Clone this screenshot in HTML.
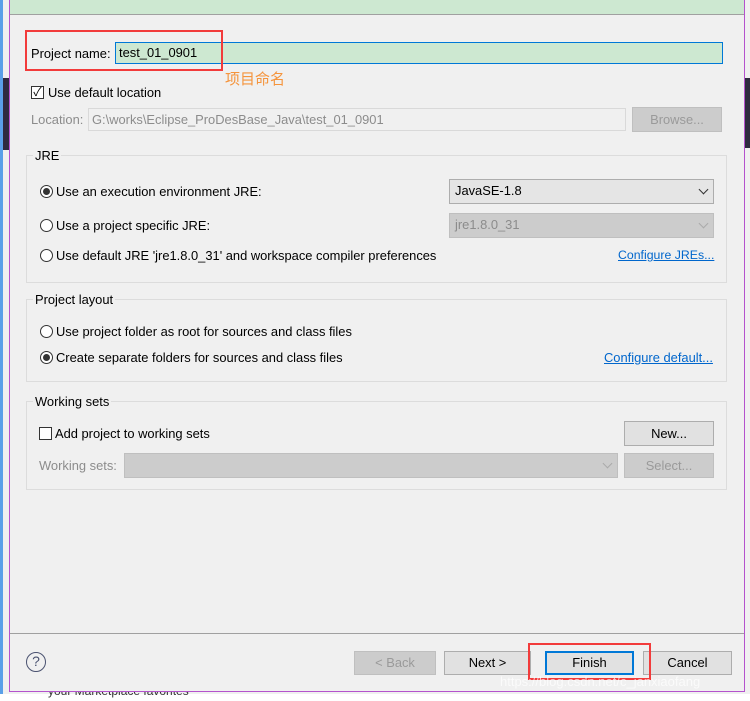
<!DOCTYPE html>
<html><head><meta charset="utf-8"><style>
*{margin:0;padding:0;box-sizing:border-box}
body{width:750px;height:701px;background:#f0f0f0;position:relative;overflow:hidden;font-family:"Liberation Sans","Noto Sans CJK SC",sans-serif;font-size:12.9px;color:#000}
.a{position:absolute}
.dlg{left:9px;top:0;width:736px;height:692px;background:#f0f0f0;border-left:1px solid #b452cd;border-right:1px solid #b452cd;border-bottom:1px solid #b452cd}
.grp{border:1px solid #dcdcdc}
.lbl{background:#f0f0f0;padding:0 2px}
.rad{width:13px;height:13px;border:1px solid #333;border-radius:50%;background:#fff}
.rad.on::after{content:"";position:absolute;left:2px;top:2px;width:7px;height:7px;border-radius:50%;background:#333}
.btn{border:1px solid #adadad;background:#e1e1e1;text-align:center;line-height:22px}
.dis{color:#9a9a9a;background:#cccccc;border-color:#bfbfbf}
.lnk{color:#0066cc;text-decoration:underline}
.cmb{border:1px solid #adadad;background:#e5e5e5;padding-left:5px;line-height:22px}
.chev{position:absolute;right:6px;top:6px;width:7px;height:7px;border-right:1.3px solid #333;border-bottom:1.3px solid #333;transform:rotate(45deg)}
</style></head><body>
<div class="a" style="left:0;top:78px;width:9px;height:72px;background:#2e2b3f"></div>
<div class="a" style="left:745px;top:78px;width:5px;height:70px;background:#2e2b3f"></div>
<div class="a" style="left:0;top:0;width:3px;height:701px;background:#5aa0e8"></div>
<div class="a" style="left:0;top:694px;width:750px;height:7px;background:#fff"></div>
<div class="a" style="left:48px;top:684px;font-size:12px;color:#333">your Marketplace favorites</div>
<div class="a dlg"></div>
<div class="a" style="left:10px;top:0;width:734px;height:15px;background:#cde8d1;border-bottom:1px solid #a0a0a0"></div>
<div class="a" style="left:31px;top:46px">Project name:</div>
<div class="a" style="left:115px;top:42px;width:608px;height:22px;border:1px solid #0078d7;background:#cde8d1;padding-left:3px;line-height:20px">test_01_0901</div>
<div class="a" style="left:25px;top:30px;width:198px;height:41px;border:2px solid #f23b3b"></div>
<div class="a" style="left:225px;top:68px;color:#f5943c;font-size:15px">项目命名</div>
<div class="a" style="left:31px;top:86px;width:13px;height:13px;border:1px solid #333;background:#fff;font-size:12px;line-height:11px;text-align:center">✓</div>
<div class="a" style="left:48px;top:85px">Use default location</div>
<div class="a" style="left:31px;top:112px;color:#8c8c8c">Location:</div>
<div class="a" style="left:88px;top:108px;width:538px;height:23px;border:1px solid #d9d9d9;background:#f0f0f0;color:#8c8c8c;padding-left:3px;line-height:21px">G:\works\Eclipse_ProDesBase_Java\test_01_0901</div>
<div class="a btn dis" style="left:632px;top:107px;width:90px;height:25px;line-height:23px">Browse...</div>

<div class="a grp" style="left:26px;top:155px;width:701px;height:128px"></div>
<div class="a lbl" style="left:33px;top:148px">JRE</div>
<div class="a rad on" style="left:40px;top:185px"></div><div class="a" style="left:56px;top:184px">Use an execution environment JRE:</div>
<div class="a rad" style="left:40px;top:219px"></div><div class="a" style="left:56px;top:218px">Use a project specific JRE:</div>
<div class="a rad" style="left:40px;top:249px"></div><div class="a" style="left:56px;top:248px">Use default JRE 'jre1.8.0_31' and workspace compiler preferences</div>
<div class="a cmb" style="left:449px;top:179px;width:265px;height:25px">JavaSE-1.8<span class="chev"></span></div>
<div class="a cmb" style="left:449px;top:213px;width:265px;height:25px;background:#cccccc;border-color:#bfbfbf;color:#8c8c8c">jre1.8.0_31<span class="chev" style="border-color:#aaa"></span></div>
<div class="a lnk" style="left:618px;top:248px;font-size:12.3px">Configure JREs...</div>

<div class="a grp" style="left:26px;top:299px;width:701px;height:83px"></div>
<div class="a lbl" style="left:33px;top:292px">Project layout</div>
<div class="a rad" style="left:40px;top:325px"></div><div class="a" style="left:56px;top:324px">Use project folder as root for sources and class files</div>
<div class="a rad on" style="left:40px;top:351px"></div><div class="a" style="left:56px;top:350px">Create separate folders for sources and class files</div>
<div class="a lnk" style="left:604px;top:350px">Configure default...</div>

<div class="a grp" style="left:26px;top:401px;width:701px;height:89px"></div>
<div class="a lbl" style="left:33px;top:394px">Working sets</div>
<div class="a" style="left:39px;top:427px;width:13px;height:13px;border:1px solid #333;background:#fff"></div>
<div class="a" style="left:55px;top:426px">Add project to working sets</div>
<div class="a btn" style="left:624px;top:421px;width:90px;height:25px;line-height:23px">New...</div>
<div class="a" style="left:39px;top:458px;color:#8c8c8c">Working sets:</div>
<div class="a cmb" style="left:124px;top:453px;width:494px;height:25px;background:#cccccc;border-color:#bfbfbf"><span class="chev" style="border-color:#aaa"></span></div>
<div class="a btn dis" style="left:624px;top:453px;width:90px;height:25px;line-height:23px">Select...</div>

<div class="a" style="left:10px;top:633px;width:734px;height:1px;background:#a0a0a0"></div>
<div class="a" style="left:26px;top:652px;width:20px;height:20px;border:1.5px solid #4a5270;border-radius:50%;text-align:center;line-height:17px;color:#4a5270;font-size:14px">?</div>
<div class="a btn dis" style="left:354px;top:651px;width:82px;height:24px">&lt; Back</div>
<div class="a btn" style="left:444px;top:651px;width:87px;height:24px">Next &gt;</div>
<div class="a btn" style="left:545px;top:651px;width:89px;height:24px;border:2px solid #0078d7;line-height:20px">Finish</div>
<div class="a btn" style="left:643px;top:651px;width:89px;height:24px">Cancel</div>
<div class="a" style="left:528px;top:643px;width:123px;height:37px;border:2px solid #f23b3b"></div>
<div class="a" style="left:500px;top:674px;color:rgba(255,255,255,0.7);font-size:13px">https://blog.csdn.net/c_janxiaofang</div>
</body></html>
